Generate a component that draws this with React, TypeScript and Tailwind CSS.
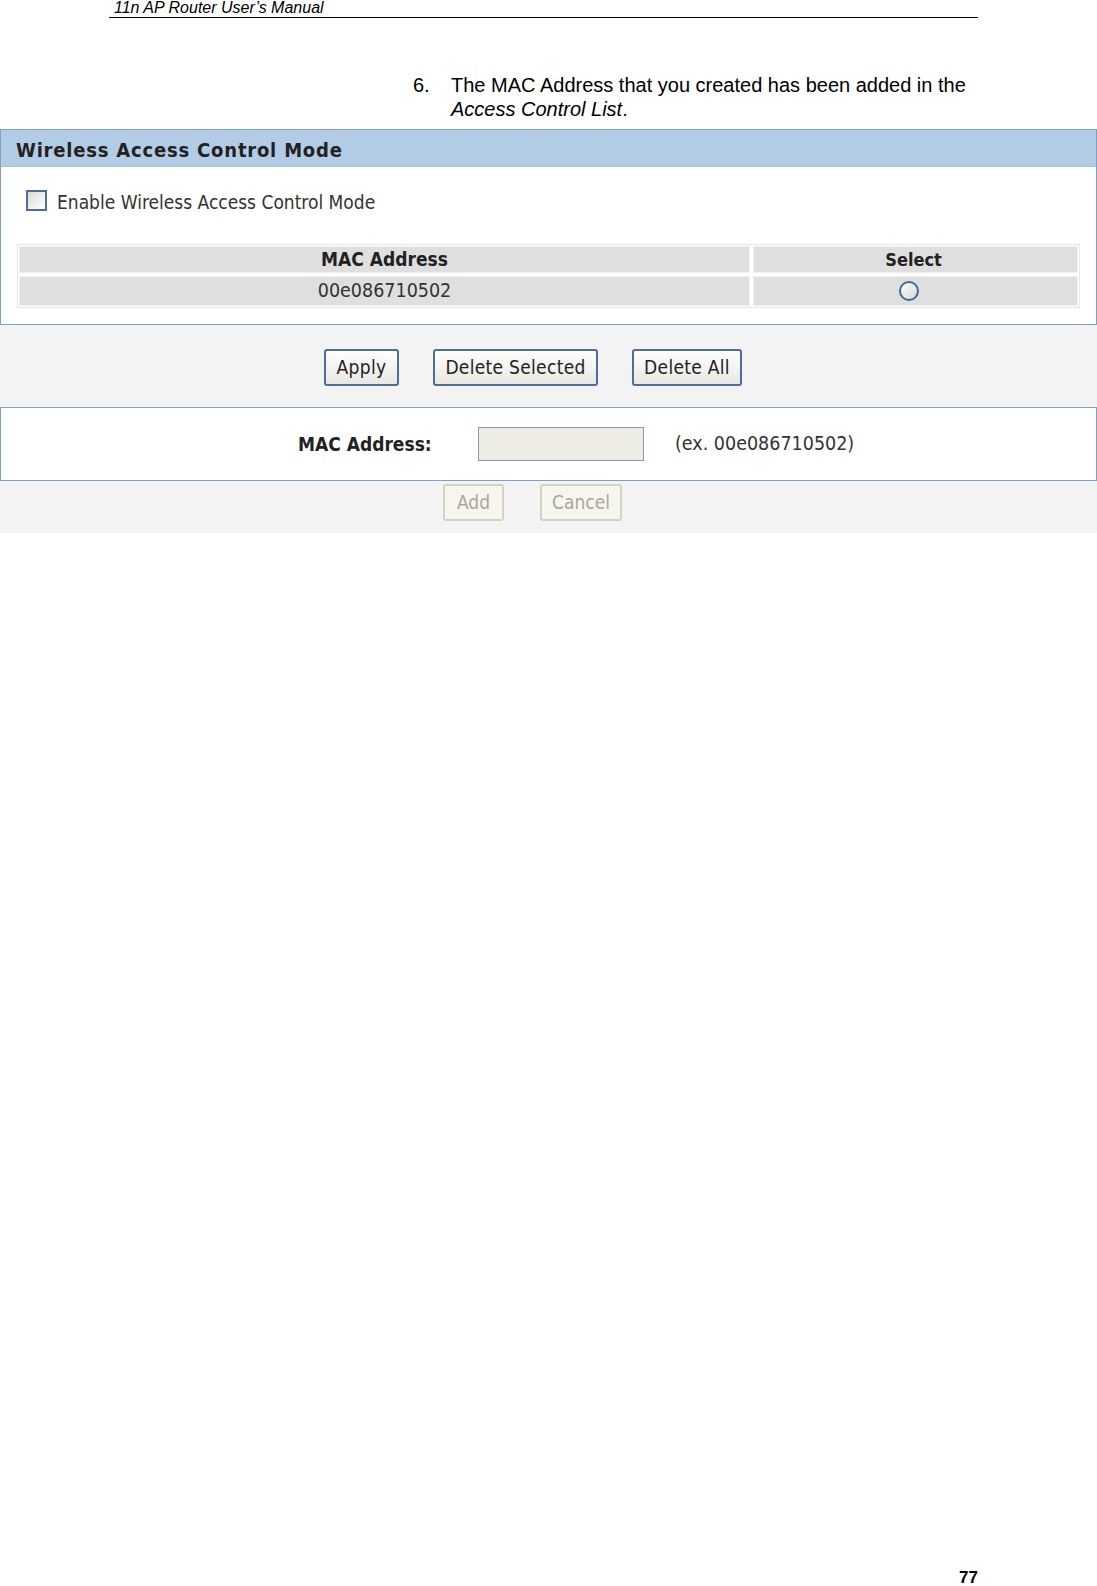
import React from 'react'

const ui = { fontFamily: '"DejaVu Sans", Verdana, sans-serif', fontStretch: 'condensed' as const }
const doc = { fontFamily: '"Liberation Sans", Arial, sans-serif' }

function Btn({ label, w, disabled }: { label: string; w: string; disabled?: boolean }) {
  return (
    <button
      style={ui}
      className={
        disabled
          ? `${w} h-[37px] rounded-[3px] border-2 border-[#d4d2c0] bg-[#f6f5ee] text-[19px] text-[#a8a89c]`
          : `${w} h-[37px] rounded-[3px] border-2 border-[#4d6d9c] bg-gradient-to-b from-white to-[#e8e7e0] text-[19px] text-[#222] tracking-[0.3px]`
      }
    >
      {label}
    </button>
  )
}

export default function App() {
  return (
    <div className="relative w-[1097px] h-[1586px] bg-white text-black">
      {/* running header */}
      <div className="ml-[109px] w-[869px] border-b border-black pl-[5px] h-[18px]">
        <span style={doc} className="italic text-[16px] leading-[15px] block">
          11n AP Router User&rsquo;s Manual
        </span>
      </div>

      {/* step text */}
      <div style={doc} className="mt-[55px] flex text-[20px] leading-[24px] pl-[413px] h-[56px]">
        <span className="w-[38px]">6.</span>
        <div>
          <div>The MAC Address that you created has been added in the</div>
          <div>
            <i>Access Control List</i>.
          </div>
        </div>
      </div>

      {/* screenshot */}
      <div className="w-[1097px]">
        <div className="border border-[#7f9fc8]">
          <div className="h-[37px] bg-[#b3cce6] border-b border-[#a6c0dd] flex items-center pl-[15px] pt-[3px]">
            <span style={ui} className="font-bold text-[20px] text-[#222] tracking-[0.8px]">
              Wireless Access Control Mode
            </span>
          </div>
          <div className="bg-white pt-[23px] pb-[16px]">
            <div className="flex items-center pl-[25px] h-[21px]">
              <span className="w-[21px] h-[21px] border-2 border-[#4d6d9c] bg-gradient-to-br from-[#dcdcd4] to-white" />
              <span style={ui} className="ml-[10px] text-[19px] text-[#333] pt-[3px]">
                Enable Wireless Access Control Mode
              </span>
            </div>
            <div className="mt-[33px] ml-[16px] mr-[16px] border border-[#e6e6e6] p-[1px]">
              <div className="flex gap-[3px]">
                <div className="flex-1 h-[27px] bg-[#dfdfdf] border border-[#f0f0f0] flex items-center justify-center">
                  <span style={ui} className="font-bold text-[19px] text-[#222]">MAC Address</span>
                </div>
                <div className="w-[325px] h-[27px] bg-[#dfdfdf] border border-[#f0f0f0] flex items-center justify-center">
                  <span style={ui} className="font-bold text-[18px] text-[#222] mr-[4px]">Select</span>
                </div>
              </div>
              <div className="flex gap-[3px] mt-[3px]">
                <div className="flex-1 h-[30px] bg-[#dfdfdf] border border-[#f0f0f0] flex items-center justify-center">
                  <span style={ui} className="text-[19.5px] text-[#333]">00e086710502</span>
                </div>
                <div className="w-[325px] h-[30px] bg-[#dfdfdf] border border-[#f0f0f0] flex items-center justify-center">
                  <span className="mr-[14px] w-[20px] h-[20px] rounded-full border-2 border-[#3d6b9e] bg-gradient-to-br from-white to-[#d6d6d0]" />
                </div>
              </div>
            </div>
          </div>
        </div>

        <div className="bg-[#f3f3f3] h-[82px] flex items-center gap-[34px] pl-[324px] pt-[2px]">
          <Btn label="Apply" w="w-[75px]" />
          <Btn label="Delete Selected" w="w-[165px]" />
          <Btn label="Delete All" w="w-[110px]" />
        </div>

        <div className="bg-white border border-[#7f9fc8] h-[74px] flex items-center">
          <span style={ui} className="ml-[297px] w-[180px] font-bold text-[19px] text-[#222]">
            MAC Address:
          </span>
          <span className="w-[166px] h-[34px] bg-[#ecebe4] border border-[#7f9db9]" />
          <span style={ui} className="ml-[31px] text-[19.5px] text-[#333]">
            (ex. 00e086710502)
          </span>
        </div>

        <div className="bg-[#f3f3f3] h-[52px] flex items-start pt-[3px] gap-[36px] pl-[443px]">
          <Btn label="Add" w="w-[61px]" disabled />
          <Btn label="Cancel" w="w-[82px]" disabled />
        </div>
      </div>

      {/* page number */}
      <div style={doc} className="absolute left-[959px] top-[1570px] font-bold text-[17px] leading-[16px]">
        77
      </div>
    </div>
  )
}
